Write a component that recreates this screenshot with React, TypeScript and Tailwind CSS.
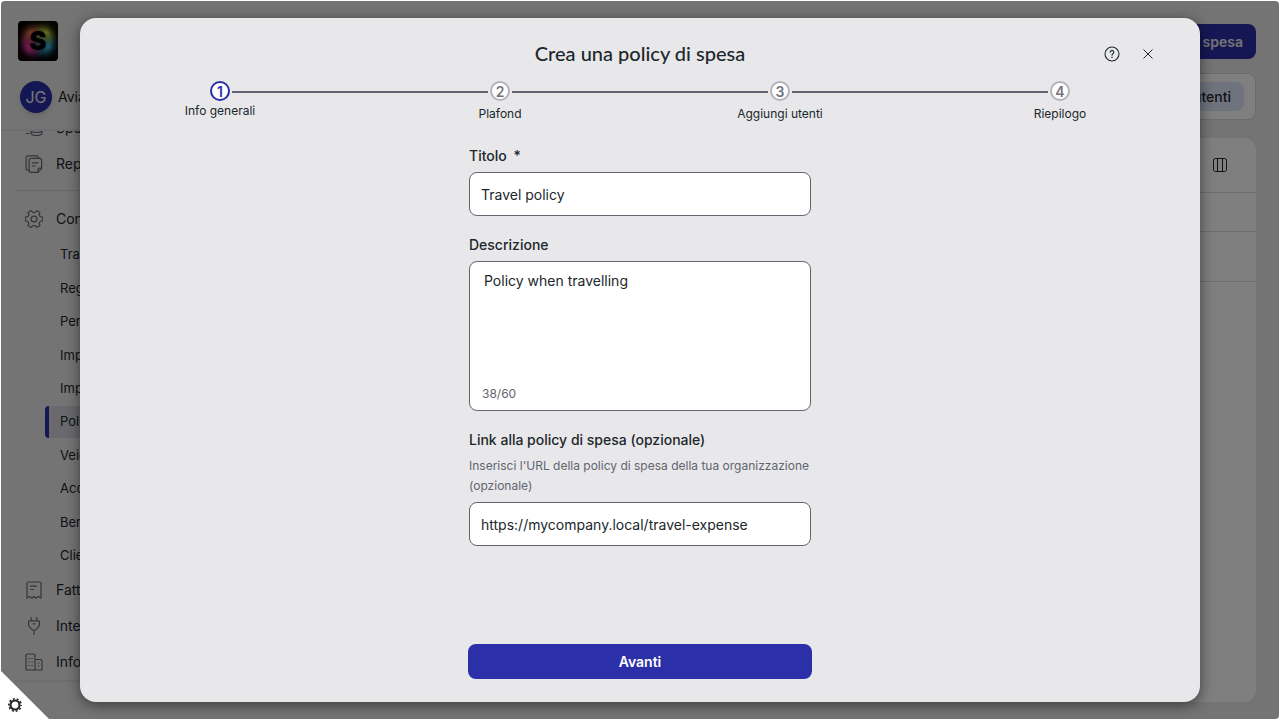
import { useState } from 'react';
import clsx from 'clsx';

interface NavItem {
  label: string;
  icon: React.ReactNode;
}

const iconProps = {
  viewBox: '0 0 18 18',
  fill: 'none',
  stroke: 'currentColor',
  strokeWidth: 1.2,
  strokeLinecap: 'round' as const,
  strokeLinejoin: 'round' as const,
  className: 'size-[18px] shrink-0 text-[#686a76]',
};

function ExpensesIcon() {
  return (
    <svg {...iconProps}>
      <ellipse cx="11.5" cy="8" rx="5.5" ry="2.5" />
      <path d="M6 8v6c0 1.4 2.5 2.5 5.5 2.5S17 15.4 17 14V8M1.5 14.5H4M6 11c0 1.4 2.5 2.5 5.500 2.500S17 12.400 17 11" />
    </svg>
  );
}

function ReportIcon() {
  return (
    <svg {...iconProps}>
      <path d="M4 15.3H3a1.900 1.900 0 0 1-1.900-1.900V2.700A1.900 1.900 0 0 1 3 .8h8.500a1.900 1.900 0 0 1 1.900 1.900" />
      <path d="M6 3.300h8.700a1.900 1.900 0 0 1 1.900 1.900v8.100L13 17.300H6a1.900 1.900 0 0 1-1.900-1.900V5.200A1.900 1.900 0 0 1 6 3.300z" />
      <path d="M16.600 13.200h-2.200a1.400 1.400 0 0 0-1.400 1.400v2.600M7.300 7.800h5.800M7.300 11h3" />
    </svg>
  );
}

// Outline of a six-toothed gear centred in the 18px box
const gearPoints = [0, 60, 120, 180, 240, 300]
  .flatMap((deg) => [
    [6.6, deg - 20],
    [8.6, deg - 14],
    [8.8, deg],
    [8.6, deg + 14],
    [6.6, deg + 20],
  ])
  .map(([r, deg]) => {
    const a = (deg * Math.PI) / 180;
    return `${(9 + r * Math.cos(a)).toFixed(2)},${(9 + r * Math.sin(a)).toFixed(2)}`;
  })
  .join(' ');

function GearIcon() {
  return (
    <svg {...iconProps}>
      <polygon points={gearPoints} />
      <circle cx="9" cy="9" r="2.900" />
    </svg>
  );
}

function InvoiceIcon() {
  return (
    <svg {...iconProps}>
      <path d="M2 17V2.400C2 1.600 2.500 1 3.300 1h11.400c.8 0 1.300.6 1.300 1.400V17l-2.600-1.600-2.200 1.800L9 15.500l-2.200 1.700-2.200-1.800L2 17zM5.600 5.200h5.800M5.600 8.500h3" />
    </svg>
  );
}

function PlugIcon() {
  return (
    <svg {...iconProps}>
      <path d="M6.200.6v3M11.800.6v3M9 13.800v3.600M4.400 3.800h9.200c.5 0 .8.300.8.800v2.800c0 2.800-3.200 5-5.400 6.400-2.200-1.400-5.400-3.600-5.400-6.400V4.600c0-.5.3-.8.8-.8zM8.200 6.800h1.600" />
    </svg>
  );
}

function BuildingIcon() {
  return (
    <svg {...iconProps}>
      <path d="M1 17V2.400C1 1.600 1.600 1 2.400 1h6.200c.8 0 1.400.6 1.400 1.400V17H1zM10 6.500h5.700c.8 0 1.300.5 1.300 1.300V17h-7" />
      <path d="M3.700 5.500h.6M6.800 5.500h.6M3.700 9h.6M6.800 9h.6M3.700 12.500h.6M6.800 12.500h.6M13.200 10h.6M13.200 13h.6" />
    </svg>
  );
}

const topItems: NavItem[] = [
  { label: 'Spese', icon: <ExpensesIcon /> },
  { label: 'Report', icon: <ReportIcon /> },
];

const bottomItems: NavItem[] = [
  { label: 'Fatture', icon: <InvoiceIcon /> },
  { label: 'Integrazioni', icon: <PlugIcon /> },
  { label: 'Informazioni', icon: <BuildingIcon /> },
];

const subItems = [
  'Transazioni',
  'Regole',
  'Permessi',
  'Importazioni',
  'Impostazioni',
  'Policy',
  'Veicoli',
  'Account',
  'Benefit',
  'Clienti',
];

const steps = ['Info generali', 'Plafond', 'Aggiungi utenti', 'Riepilogo'];

function NavLink({ item }: { item: NavItem }) {
  return (
    <a href="#" className="flex h-9 shrink-0 items-center gap-[13px] pl-6 text-sm">
      {item.icon}
      {item.label}
    </a>
  );
}

function Sidebar() {
  return (
    <aside className="flex w-60 shrink-0 flex-col">
      <header className="flex flex-col gap-5 border-b-2 border-[#dcdce0] pt-5 pb-4 pl-[17px]">
        <div className="flex size-10 items-center justify-center rounded bg-black bg-[radial-gradient(circle_at_50%_50%,transparent_45%,#000000cc_72%),radial-gradient(circle_at_72%_28%,#c8d83c_0%,transparent_34%),radial-gradient(circle_at_76%_64%,#38b8e0_0%,transparent_40%),radial-gradient(circle_at_26%_68%,#e63ca8_0%,transparent_40%),radial-gradient(circle_at_32%_32%,#e87848_0%,transparent_40%)] text-[26px] leading-none font-black text-black">
          S
        </div>
        <div className="flex items-center gap-1.5 pl-0.5">
          <span className="flex size-8 items-center justify-center rounded-full bg-[#2b2fa8] text-base text-[#e8e8ea] shadow-md">
            JG
          </span>
          <span className="text-sm">Aviato</span>
        </div>
      </header>

      <nav className="flex min-h-0 flex-1 flex-col justify-end overflow-hidden">
        {topItems.map((item) => (
          <NavLink key={item.label} item={item} />
        ))}
        <hr className="mt-2 mb-2.5 ml-3.5 shrink-0 border-[#cfcfd4]" />
        <NavLink item={{ label: 'Configurazione', icon: <GearIcon /> }} />
        <ul className="ml-11 flex h-[335px] shrink-0 flex-col justify-between pt-0.5">
          {subItems.map((label) => (
            <li key={label}>
              <a
                href="#"
                className={clsx(
                  'flex h-8 items-center rounded-l border-l-4 pl-[11px] text-[13px]',
                  label === 'Policy' ? 'border-[#2b2fa8] bg-[#d3d3dc]' : 'border-transparent'
                )}
              >
                {label}
              </a>
            </li>
          ))}
        </ul>
        {bottomItems.map((item) => (
          <NavLink key={item.label} item={item} />
        ))}
      </nav>
      <footer className="ml-3.5 h-[39px] shrink-0 border-t-2 border-[#dcdce0]" />
    </aside>
  );
}

function PolicyPage() {
  return (
    <main className="flex min-w-0 flex-1 flex-col items-end pt-[23px] pr-[23px] pb-[17px]">
      <button className="h-[35px] rounded-lg bg-[#2b2fa8] px-[13px] text-sm font-semibold text-[#e8e8ea]">
        Crea una policy di spesa
      </button>
      <div className="mt-3.5 flex h-[47px] items-center rounded-lg border border-[#d4d4da] bg-white px-[11px]">
        <button className="h-[29px] rounded-lg px-[13px] text-sm font-medium">Policy</button>
        <button className="h-[29px] rounded-lg bg-[#dfe7fb] px-[13px] text-sm font-medium">Policy utenti</button>
      </div>
      <section className="mt-[18px] w-full flex-1 rounded-xl bg-white">
        <div className="flex h-[55px] items-center justify-end border-b border-[#dcdce0] pr-[29px]">
          <button aria-label="Colonne">
            <svg viewBox="0 0 14 14" fill="none" stroke="currentColor" className="size-3.5">
              <rect x=".5" y=".5" width="13" height="13" rx="2" />
              <path d="M4.5.5v13M9.5.5v13" />
            </svg>
          </button>
        </div>
        <div className="h-[39px] border-b border-[#dcdce0]" />
        <div className="h-[50px] border-b border-[#dcdce0]" />
      </section>
    </main>
  );
}

function Stepper() {
  return (
    <ol className="mt-3 grid h-10 grid-cols-4">
      {steps.map((step, i) => {
        const active = i === 0;
        const line = 'mt-0.5 h-0.5 flex-1';
        return (
          <li key={step} className={clsx('flex flex-col items-center', active ? 'gap-0.5' : 'gap-[5px]')}>
            <div className="flex w-full items-center gap-0.5">
              <span className={clsx(line, i > 0 && 'bg-[#62646f]')} />
              <span
                className={clsx(
                  'flex size-5 items-center justify-center rounded-full border-2 bg-white pt-px text-sm leading-4 font-semibold',
                  active ? 'border-[#2b2fa8] text-[#2b2fa8]' : 'border-[#b4b4bb] text-[#72737c]'
                )}
              >
                {i + 1}
              </span>
              <span className={clsx(line, i < steps.length - 1 && 'bg-[#62646f]')} />
            </div>
            <span className="text-xs">{step}</span>
          </li>
        );
      })}
    </ol>
  );
}

function PolicyDialog() {
  const [title, setTitle] = useState('Travel policy');
  const [description, setDescription] = useState('Policy when travelling');
  const [link, setLink] = useState('https://mycompany.local/travel-expense');

  const inputClass = 'h-11 w-full rounded-lg border border-[#62646f] bg-white px-[11px] text-sm';

  return (
    <div
      role="dialog"
      aria-modal="true"
      aria-labelledby="dialog-title"
      className="flex w-full flex-col rounded-2xl bg-[#e8e8ea] shadow-[0_3px_14px_rgba(0,0,0,0.5)]"
    >
      <header className="grid grid-cols-[1fr_auto_1fr] items-center px-[45px] pt-5">
        <h1 id="dialog-title" className="col-start-2 font-[Lato,sans-serif] text-xl leading-[31px] font-medium">
          Crea una policy di spesa
        </h1>
        <div className="flex items-center justify-end gap-[22px]">
          <button aria-label="Aiuto">
            <svg viewBox="0 0 16 16" fill="none" stroke="currentColor" strokeWidth="1.100" strokeLinecap="round" className="size-4">
              <circle cx="8" cy="8" r="7" />
              <path d="M6.200 6.200a1.800 1.800 0 1 1 2.700 1.600C8.200 8.200 8 8.500 8 9.300" />
              <path d="M8 11.300v.1" strokeWidth="1.400" />
            </svg>
          </button>
          <button aria-label="Chiudi" className="mr-px">
            <svg viewBox="0 0 12 12" fill="none" stroke="currentColor" strokeLinecap="round" className="size-3">
              <path d="M1.800 1.800l8.400 8.400M10.200 1.800l-8.400 8.400" />
            </svg>
          </button>
        </div>
      </header>

      <Stepper />

      <form className="mx-auto flex w-[344px] flex-1 flex-col pt-[25px] pb-[23px]" onSubmit={(e) => e.preventDefault()}>
        <div className="flex flex-col gap-[19px] px-px">
          <div>
            <label htmlFor="title" className="mb-1.5 block text-sm font-medium">
              Titolo <span className="ml-[3px]">*</span>
            </label>
            <input id="title" value={title} onChange={(e) => setTitle(e.target.value)} className={inputClass} />
          </div>

          <div>
            <label htmlFor="description" className="mb-1.5 block text-sm font-medium">
              Descrizione
            </label>
            <div className="flex h-[150px] flex-col rounded-lg border border-[#62646f] bg-white">
              <textarea
                id="description"
                value={description}
                onChange={(e) => setDescription(e.target.value)}
                className="w-full flex-1 resize-none px-3.5 pt-[9px] text-sm outline-none"
              />
              <span className="px-3 pb-2 text-xs text-[#62646f]">38/60</span>
            </div>
          </div>

          <div>
            <label htmlFor="link" className="mb-1.5 block text-sm font-medium">
              Link alla policy di spesa (opzionale)
            </label>
            <p id="link-hint" className="mb-1.5 text-xs leading-5 text-[#62646f]">
              Inserisci l'URL della policy di spesa della tua organizzazione (opzionale)
            </p>
            <input
              id="link"
              type="url"
              aria-describedby="link-hint"
              value={link}
              onChange={(e) => setLink(e.target.value)}
              className={inputClass}
            />
          </div>
        </div>

        <button type="submit" className="mt-auto h-[35px] rounded-lg bg-[#2b2fa8] text-sm font-semibold text-white">
          Avanti
        </button>
      </form>
    </div>
  );
}

export default function App() {
  return (
    <div className="relative h-screen bg-white p-px font-[Inter,sans-serif] text-[#20272b]">
      <div className="flex h-full overflow-hidden rounded bg-[#e8e8ea]">
        <Sidebar />
        <PolicyPage />
      </div>

      {/* Modal layer */}
      <div className="absolute inset-px flex rounded bg-black/50 px-[79px] py-[17px]">
        <PolicyDialog />
      </div>

      {/* Corner settings toggle */}
      <button
        aria-label="Impostazioni"
        className="absolute bottom-px left-px flex size-12 items-end bg-white pb-[7px] pl-[7px] [clip-path:polygon(0_0,100%_100%,0_100%)]"
      >
        <svg viewBox="0 0 14 14" fill="none" stroke="#26292c" className="size-3.5">
          <circle cx="7" cy="7" r="4.500" strokeWidth="2.200" />
          <circle cx="7" cy="7" r="6.200" strokeWidth="1.600" strokeDasharray="2 1.896" strokeDashoffset="1" />
        </svg>
      </button>
    </div>
  );
}
